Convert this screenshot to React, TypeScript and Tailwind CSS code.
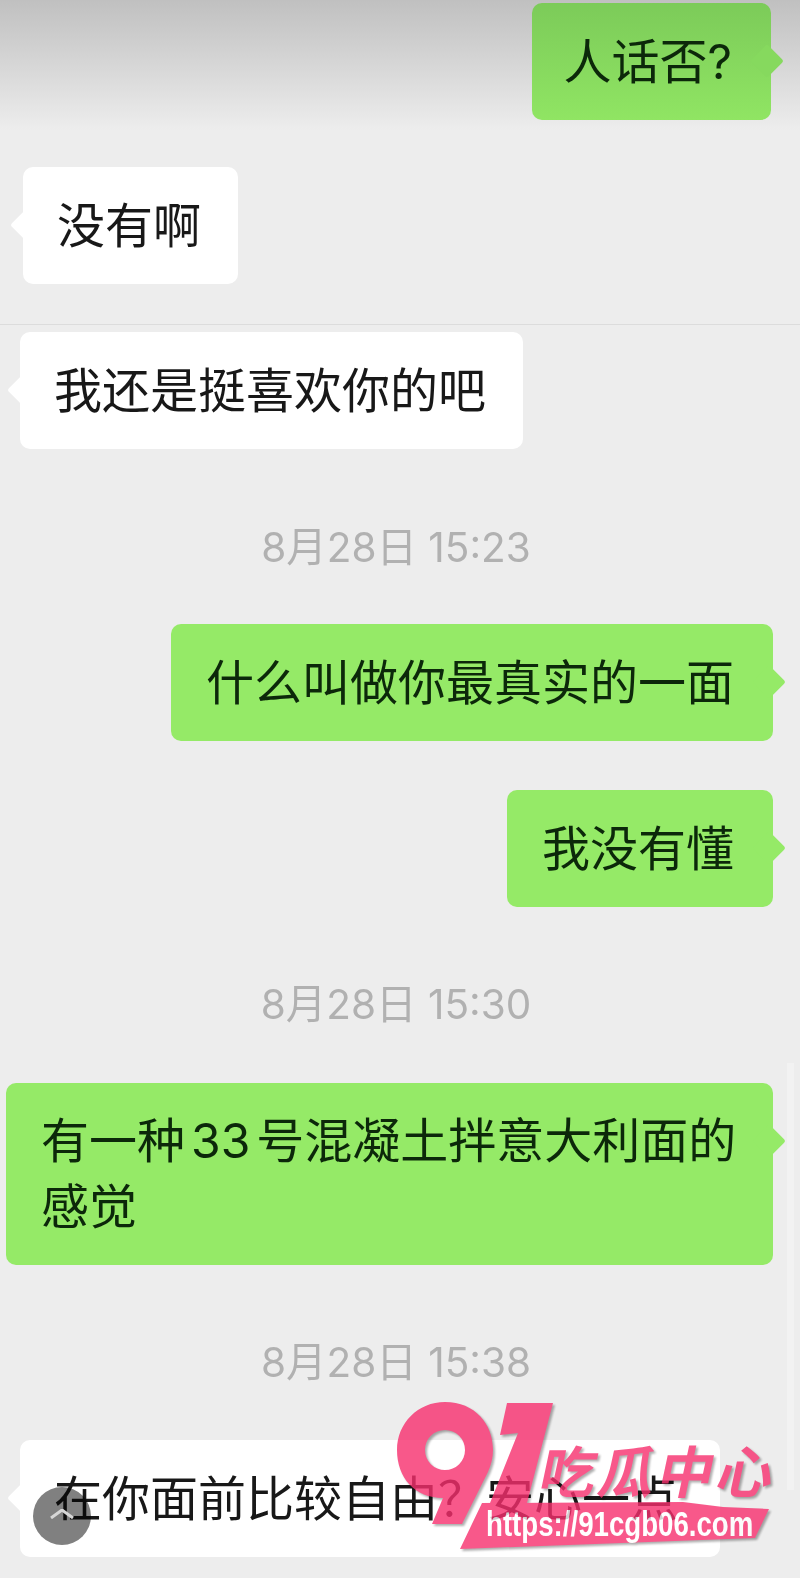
import type { FC, ReactNode } from 'react';

interface BubbleProps {
  side: 'left' | 'right';
  className?: string;
  tailClass?: string;
  children: ReactNode;
}

const Bubble: FC<BubbleProps> = ({ side, className, tailClass, children }) => {
  const isRight = side === 'right';
  const tone = isRight ? 'bg-[#95ea67] pl-[35px] pr-[39px] text-[#0c280a]' : 'bg-white pl-[34px] pr-[37px] text-[#181818]';
  return (
    <div className={`relative rounded-[10px] py-[25px] text-[48px] ${tone} ${className ?? 'leading-[67px]'}`}>
      <span
        className={`absolute top-[46px] h-6 w-6 rotate-45 rounded-[3px] ${
          isRight ? '-right-[8px]' : '-left-[8px]'
        } ${tailClass ?? (isRight ? 'bg-[#95ea67]' : 'bg-white')}`}
      />
      <span className="relative">{children}</span>
    </div>
  );
};

const TimeLabel: FC<{ text: string; className: string }> = ({ text, className }) => (
  <div className={`pr-[8px] text-center text-[40.5px] leading-[50px] text-[#b1b1b1] ${className}`}>{text}</div>
);

const Logo: FC = () => (
  <div className="absolute left-[380px] top-[1390px] h-[188px] w-[400px] opacity-80 drop-shadow-[2px_2px_1px_rgba(0,0,0,0.4)]">
    <svg viewBox="0 0 400 188" className="absolute inset-0 h-full w-full">
      <path
        fill="#f72f6e"
        fillRule="evenodd"
        d="M65 12C95 12 113 34 113 60C113 68 111 75 108 82L82 134L52 134L63 108C35 108 17 88 17 60C17 33 38 12 65 12ZM65 40A20 20 0 1 0 65 80A20 20 0 1 0 65 40Z"
      />
      <polygon fill="#f72f6e" points="127,13 173,13 147,113 110,113 138,43 120,45" />
      <polygon fill="#f72f6e" points="102,113 303,112 343,117 389,119 375,148 80,159" />
    </svg>
    <div className="absolute left-[161px] top-[48px] flex skew-x-[-12deg] text-[56px] font-bold leading-[70px] tracking-[3px] text-[#f72f6e]">
      吃瓜中心
    </div>
    <div className="absolute left-[106px] top-[113px] origin-left scale-x-[0.79] whitespace-nowrap font-['Liberation_Sans',sans-serif] text-[35px] font-bold leading-[42px] text-white">
      https://91cgb06.com
    </div>
  </div>
);

export default function App() {
  return (
    <div className="relative h-[1578px] w-[800px] overflow-hidden bg-[#ededed] font-['Inter','Noto_Sans_CJK_SC',sans-serif]">
      <div className="blur-[0.5px]">
        <div className="flex h-[130px] justify-end bg-gradient-to-b from-[#c0c0c0] to-[#ededed] pr-[29px] pt-[3px]">
          <div className="self-start">
            <Bubble
              side="right"
              className="bg-gradient-to-b from-[#7ccb59] to-[#90e563] !pl-[31px] leading-[67px]"
              tailClass="bg-[#86d95e]"
            >
              人话否?
            </Bubble>
          </div>
        </div>

        <div className="mt-[37px] flex pl-[23px]">
          <Bubble side="left">没有啊</Bubble>
        </div>
        <div className="mt-[40px] h-px bg-[#dcdcdc]" />
        <div className="mt-[7px] flex pl-[20px]">
          <Bubble side="left">我还是挺喜欢你的吧</Bubble>
        </div>

        <TimeLabel text="8月28日 15:23" className="mt-[74px]" />
        <div className="mt-[51px] flex justify-end pr-[27px]">
          <Bubble side="right">什么叫做你最真实的一面</Bubble>
        </div>
        <div className="mt-[49px] flex justify-end pr-[27px]">
          <Bubble side="right">我没有懂</Bubble>
        </div>

        <TimeLabel text="8月28日 15:30" className="mt-[73px]" />
        <div className="mt-[53px] flex justify-end pr-[27px]">
          <Bubble side="right" className="w-[767px] !pr-[20px] leading-[66px]">
            有一种<span className="mx-[6px]">33</span>号混凝土拌意大利面的感觉
          </Bubble>
        </div>

        <TimeLabel text="8月28日 15:38" className="mt-[73px]" />
        <div className="mt-[52px] flex pl-[20px]">
          <Bubble side="left" className="w-[700px] leading-[67px]">
            在你面前比较自由？安心一点
          </Bubble>
        </div>
      </div>

      {/* scroll track */}
      <div className="absolute left-[787px] top-[1063px] h-[427px] w-[7px] bg-[#f2f2f2]" />

      {/* back to top */}
      <button className="absolute left-[33px] top-[1487px] flex h-[58px] w-[58px] items-center justify-center">
        <span className="absolute inset-0 rounded-full bg-[#808080] mix-blend-multiply" />
        <svg viewBox="0 0 24 10" className="relative h-[10px] w-6 -translate-y-[2px]" fill="none" stroke="#d6d6d6" strokeWidth="3">
          <polyline points="1,9 12,1 23,9" />
        </svg>
      </button>

      <Logo />
    </div>
  );
}
